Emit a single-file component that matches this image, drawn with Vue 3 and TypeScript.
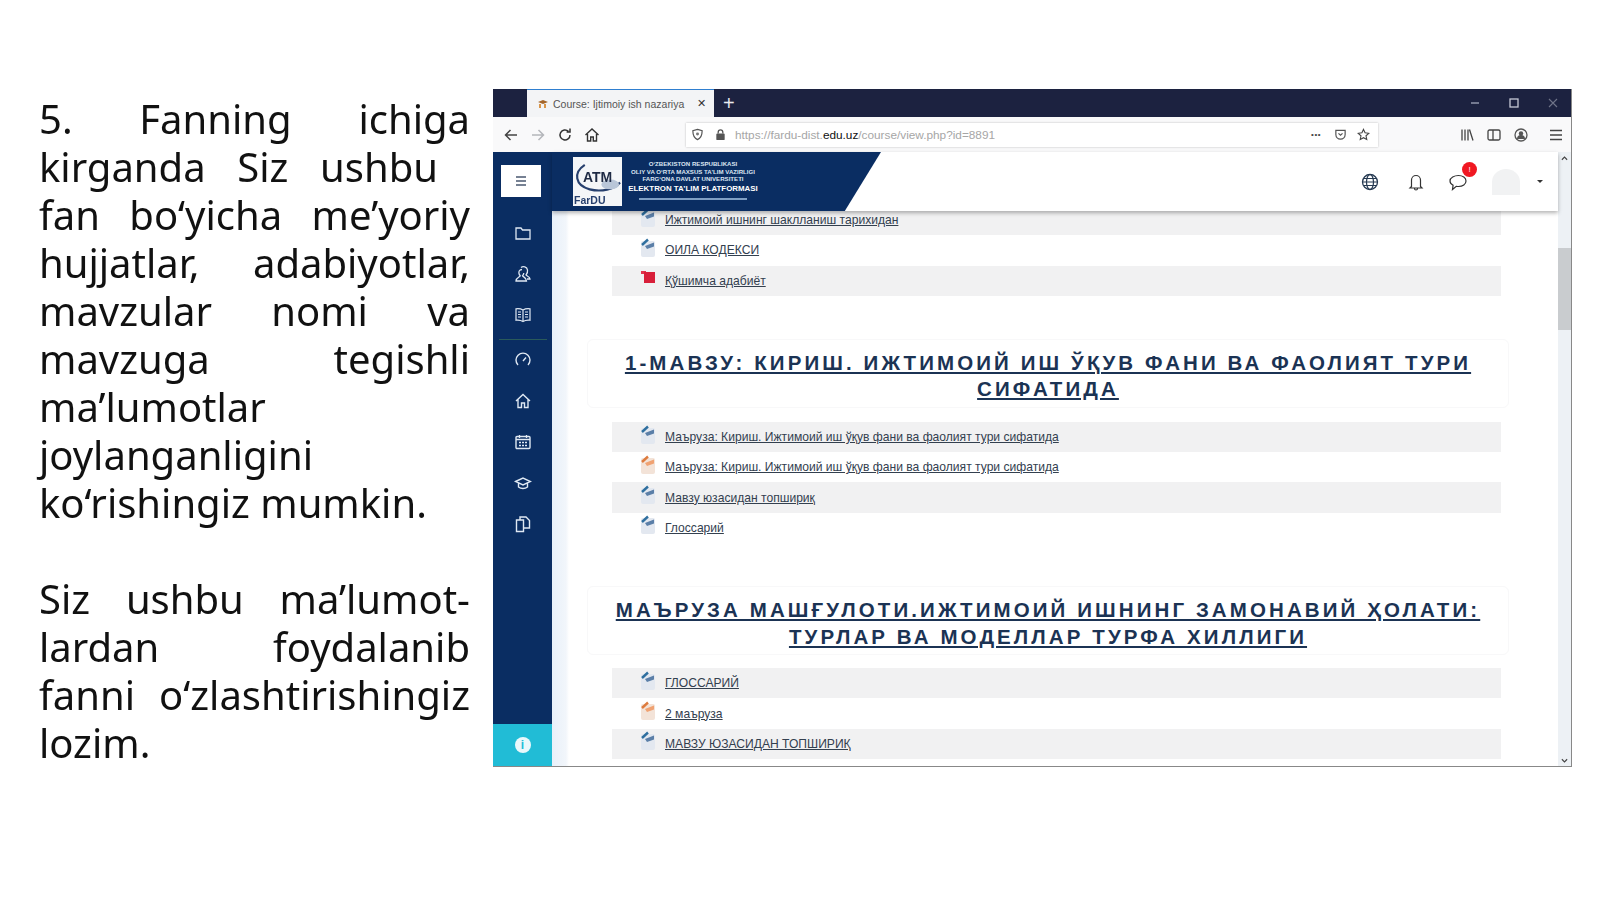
<template>
  <div class="slide">
    <div class="copy">
      <div class="para">
        <div v-for="(l, i) in introLines" :key="i" :class="['line', l.full ? 'full' : '', l.short ? 'short' : '']">{{ l.text }}</div>
      </div>
      <div class="para">
        <div v-for="(l, i) in outroLines" :key="i" :class="['line', l.full ? 'full' : '']">{{ l.text }}</div>
      </div>
    </div>

    <div class="browser">
      <!-- tab strip -->
      <div class="tabbar">
        <div class="tab">
          <svg class="favicon" viewBox="0 0 12 12"><path d="M1 4 6 2l5 2-5 2z" fill="#a5662a" /><path d="M3 6v4M8 6v4" stroke="#d9964b" stroke-width="2" /></svg>
          <span class="tab-title">Course: Ijtimoiy ish nazariya</span>
          <span class="tab-x">✕</span>
        </div>
        <span class="tab-plus">+</span>
        <div class="winctl">
          <svg viewBox="0 0 12 12"><path d="M2 6h8" stroke="#9aa0b4" stroke-width="1.4" /></svg>
          <svg viewBox="0 0 12 12"><rect x="2" y="2" width="8" height="8" fill="none" stroke="#c5c8d4" stroke-width="1.3" /></svg>
          <svg viewBox="0 0 12 12"><path d="m2 2 8 8M10 2l-8 8" stroke="#6f7488" stroke-width="1.1" /></svg>
        </div>
      </div>

      <!-- toolbar -->
      <div class="toolbar">
        <div class="nav">
          <span class="back-wrap"><svg class="tb" viewBox="0 0 16 16"><path d="M14 8H3M7.5 3 2.5 8l5 5" fill="none" stroke="#444" stroke-width="1.5" /></svg></span>
          <svg class="tb" viewBox="0 0 16 16"><path d="M2 8h11M8.5 3l5 5-5 5" fill="none" stroke="#b4b6ba" stroke-width="1.5" /></svg>
          <svg class="tb" viewBox="0 0 16 16"><path d="M13 8a5 5 0 1 1-1.6-3.7M13 1.5v3.4H9.6" fill="none" stroke="#333" stroke-width="1.5" /></svg>
          <svg class="tb" viewBox="0 0 16 16"><path d="M1.5 8 8 2l6.500 6M3.500 7v7h3.200v-4h2.600v4h3.200V7" fill="none" stroke="#333" stroke-width="1.400" /></svg>
        </div>
        <div class="urlbar">
          <svg class="ub" viewBox="0 0 14 14"><path d="M7 1.500 12 3c0 5-1.500 8-5 9.500C3.500 11 2 8 2 3z" fill="none" stroke="#555" stroke-width="1.300" /><circle cx="7" cy="6.500" r="1.600" fill="#777" /></svg>
          <svg class="ub" viewBox="0 0 14 14"><rect x="2.500" y="6" width="9" height="7" rx="1" fill="#555" /><path d="M4.500 6V4.500a2.500 2.500 0 0 1 5 0V6" fill="none" stroke="#555" stroke-width="1.400" /></svg>
          <span class="url"><span class="dim">https://fardu-dist.</span>edu.uz<span class="dim">/course/view.php?id=8891</span></span>
          <span class="dots">•••</span>
          <svg class="ub" viewBox="0 0 14 14"><path d="M2 2.500h10v4.500a5 5 0 0 1-10 0z" fill="none" stroke="#555" stroke-width="1.300" /><path d="m4.800 5.800 2.200 2 2.200-2" fill="none" stroke="#555" stroke-width="1.300" /></svg>
          <svg class="ub" viewBox="0 0 14 14"><path d="m7 1.500 1.700 3.700 4 .5-3 2.700.8 4L7 10.400l-3.500 2 .8-4-3-2.700 4-.5z" fill="none" stroke="#444" stroke-width="1.200" /></svg>
        </div>
        <div class="tools">
          <svg class="tb" viewBox="0 0 16 16"><path d="M3 2.500v11M6 2.500v11M9 2.500v11M10.500 2.500l3.500 11" fill="none" stroke="#444" stroke-width="1.300" /></svg>
          <svg class="tb" viewBox="0 0 16 16"><rect x="2" y="3" width="12" height="10" rx="1.500" fill="none" stroke="#444" stroke-width="1.300" /><path d="M7 3v10" stroke="#444" stroke-width="1.300" /></svg>
          <svg class="tb" viewBox="0 0 16 16"><circle cx="8" cy="8" r="6" fill="none" stroke="#555" stroke-width="1.300" /><circle cx="8" cy="6.500" r="2.200" fill="#555" /><path d="M4 12a4 4 0 0 1 8 0z" fill="#555" /></svg>
          <svg class="tb menu" viewBox="0 0 16 16"><path d="M2 3.500h12M2 8h12M2 12.500h12" stroke="#444" stroke-width="1.400" /></svg>
        </div>
      </div>

      <div class="page">
        <!-- navy rail -->
        <aside class="rail">
          <div class="toggle"><svg viewBox="0 0 16 16"><path d="M3 4h10M3 8h10M3 12h10" stroke="#4a5870" stroke-width="1.300" /></svg></div>
          <div class="rail-icons">
            <svg viewBox="0 0 18 18"><path d="M2 4h5l1.500 2H16v9H2z" fill="none" stroke="#dfe8f3" stroke-width="1.300" /></svg>
            <svg viewBox="0 0 18 18"><path d="M7 2.500C9 1 13 1.500 13.500 5c.3 2-.5 4-1.500 5 .5 1 4 1.500 4 4h-3M8 4.500c-2.500 0-3.500 2-3 4 .2 1 .7 1.800 1.200 2.300C6 12 2 12.500 2 16h10.500c0-3.500-3.500-4-4-5.200.6-.6 1.200-1.600 1.300-2.800" fill="none" stroke="#dfe8f3" stroke-width="1.300" /></svg>
            <svg viewBox="0 0 18 18"><path d="M9 4C7 2.800 4.500 2.500 2 2.800v11.400c2.500-.3 5 0 7 1.300 2-1.300 4.500-1.600 7-1.300V2.800C13.500 2.500 11 2.800 9 4zM9 4v11.500M4 6h3M4 8.500h3M4 11h3M11 6h3M11 8.500h3M11 11h3" fill="none" stroke="#dfe8f3" stroke-width="1.200" /></svg>
          </div>
          <div class="rail-rule"></div>
          <div class="rail-icons lower">
            <svg viewBox="0 0 18 18"><path d="M4 14a7 7 0 1 1 10 0M9 10l3-3.500" fill="none" stroke="#dfe8f3" stroke-width="1.400" /></svg>
            <svg viewBox="0 0 18 18"><path d="M2 9 9 2.500 16 9M4 7.500V15.500h3.500V11h3v4.500H14V7.500" fill="none" stroke="#dfe8f3" stroke-width="1.400" /></svg>
            <svg viewBox="0 0 18 18"><rect x="2" y="3.500" width="14" height="12" rx="1" fill="none" stroke="#dfe8f3" stroke-width="1.400" /><path d="M2 6.500h14M5.500 2v3M12.500 2v3M5 9.500h2M8 9.500h2M11 9.500h2M5 12.500h2M8 12.500h2M11 12.500h2" fill="none" stroke="#dfe8f3" stroke-width="1.300" /></svg>
            <svg viewBox="0 0 18 18"><path d="M1.500 7.500 9 4l7.500 3.500L9 11zM4.500 9v4c2.500 2 6.500 2 9 0V9" fill="none" stroke="#dfe8f3" stroke-width="1.400" /></svg>
            <svg viewBox="0 0 18 18"><path d="M2.500 5h7v11.500h-7zM6 5V2h6l3.500 3.500V13H9.500" fill="none" stroke="#dfe8f3" stroke-width="1.400" /></svg>
          </div>
          <div class="rail-foot"><span class="info">i</span></div>
        </aside>

        <div class="main">
          <div class="column">
            <header class="head">
              <div class="brand">
                <div class="logo">
                  <svg viewBox="0 0 50 50" class="logo-art"><path d="M12 8C0 16 2 29 17 33c12 3 25 0 31-7" fill="none" stroke="#27406e" stroke-width="2.200" /><ellipse cx="38" cy="28" rx="9" ry="5" fill="#b9c6d8" /></svg>
                  <span class="atm">ATM</span>
                  <span class="fardu">FarDU</span>
                </div>
                <div class="org">
                  <p>O‘ZBEKISTON RESPUBLIKASI</p>
                  <p>OLIY VA O‘RTA MAXSUS TA’LIM VAZIRLIGI</p>
                  <p>FARG‘ONA DAVLAT UNIVERSITETI</p>
                  <p class="org-name">ELEKTRON TA’LIM PLATFORMASI</p>
                  <div class="org-line"></div>
                </div>
              </div>
              <div class="head-right">
                <svg class="hi globe" viewBox="0 0 20 20"><circle cx="10" cy="10" r="7.500" fill="none" stroke="#263a52" stroke-width="1.300" /><ellipse cx="10" cy="10" rx="3.500" ry="7.500" fill="none" stroke="#263a52" stroke-width="1.200" /><path d="M2.500 10h15M3.500 6.500h13M3.500 13.500h13" stroke="#263a52" stroke-width="1.100" /></svg>
                <svg class="hi" viewBox="0 0 20 20"><path d="M5.500 14.500V8a4.500 4.500 0 0 1 9 0v6.500l1.500 1.500H4zM8.500 16.500a1.500 1.500 0 0 0 3 0" fill="none" stroke="#333" stroke-width="1.200" /></svg>
                <div class="chat">
                  <svg class="hi" viewBox="0 0 20 20"><path d="M10.500 3.500c4.200 0 7.500 2.200 7.500 5.500s-3.300 5.500-7.500 5.500c-.8 0-1.500-.1-2.200-.2L4.500 17.500l.6-4.300C3.200 12.200 2 10.700 2 9c0-3.300 4.300-5.500 8.500-5.500z" fill="none" stroke="#333" stroke-width="1.200" /></svg>
                  <span class="badge">!</span>
                </div>
                <div class="avatar"></div>
                <span class="caret"></span>
              </div>
            </header>

            <div class="content">
              <ul class="rows">
                <li v-for="r in topRows" :key="r.text" class="row">
                  <svg class="fi" viewBox="0 0 16 20">
                    <template v-if="r.kind === 'red'">
                      <path d="M1 3h5v3H1z" fill="#e2344c" />
                      <rect x="4" y="4" width="11" height="11" fill="#d81f3a" />
                    </template>
                    <template v-else>
                      <rect x="1" y="3" width="14" height="16" rx="2" :fill="palette[r.kind].page" />
                      <path d="M2 7 8 1.500" :stroke="palette[r.kind].stroke" stroke-width="2.400" />
                      <path d="M5 8 14 4.500v4L7 11z" :fill="palette[r.kind].mark" />
                    </template>
                  </svg>
                  <a>{{ r.text }}</a>
                </li>
              </ul>

              <div class="topic first-topic">
                <h2><span>1-МАВЗУ: КИРИШ. ИЖТИМОИЙ ИШ ЎҚУВ ФАНИ ВА ФАОЛИЯТ ТУРИ</span><br /><span>СИФАТИДА</span></h2>
              </div>
              <ul class="rows">
                <li v-for="(r, i) in midRows" :key="i" class="row">
                  <svg class="fi" viewBox="0 0 16 20">
                    <rect x="1" y="3" width="14" height="16" rx="2" :fill="palette[r.kind].page" />
                    <path d="M2 7 8 1.500" :stroke="palette[r.kind].stroke" stroke-width="2.400" />
                    <path d="M5 8 14 4.500v4L7 11z" :fill="palette[r.kind].mark" />
                  </svg>
                  <a>{{ r.text }}</a>
                </li>
              </ul>

              <div class="topic second-topic">
                <h2><span>МАЪРУЗА МАШҒУЛОТИ.ИЖТИМОИЙ ИШНИНГ ЗАМОНАВИЙ ҲОЛАТИ:</span><br /><span>ТУРЛАР ВА МОДЕЛЛАР ТУРФА ХИЛЛИГИ</span></h2>
              </div>
              <ul class="rows">
                <li v-for="r in lastRows" :key="r.text" class="row">
                  <svg class="fi" viewBox="0 0 16 20">
                    <rect x="1" y="3" width="14" height="16" rx="2" :fill="palette[r.kind].page" />
                    <path d="M2 7 8 1.500" :stroke="palette[r.kind].stroke" stroke-width="2.400" />
                    <path d="M5 8 14 4.500v4L7 11z" :fill="palette[r.kind].mark" />
                  </svg>
                  <a>{{ r.text }}</a>
                </li>
              </ul>
            </div>
          </div>

          <div class="scroll">
            <svg class="arrow" viewBox="0 0 8 6"><path d="M1 5 4 2l3 3" fill="none" stroke="#444" stroke-width="1.300" /></svg>
            <div class="thumb"></div>
            <svg class="arrow down" viewBox="0 0 8 6"><path d="M1 1 4 4l3-3" fill="none" stroke="#444" stroke-width="1.300" /></svg>
          </div>
        </div>
      </div>
    </div>
  </div>
</template>

<script setup lang="ts">
interface Line {
  text: string
  full?: boolean
  short?: boolean
}

type Kind = 'blue' | 'orange' | 'red'

const palette: Record<string, { page: string; stroke: string; mark: string }> = {
  blue: { page: '#e3e8f0', stroke: '#2f6f9f', mark: '#5b7fa8' },
  orange: { page: '#f3e3d8', stroke: '#dd7b3e', mark: '#f0a272' },
  red: { page: '#d81f3a', stroke: '#d81f3a', mark: '#d81f3a' }
}

const introLines: Line[] = [
  { text: '5. Fanning ichiga', full: true },
  { text: 'kirganda Siz ushbu', full: true, short: true },
  { text: 'fan bo‘yicha me’yoriy', full: true },
  { text: 'hujjatlar, adabiyotlar,', full: true },
  { text: 'mavzular nomi va', full: true },
  { text: 'mavzuga tegishli', full: true },
  { text: 'ma’lumotlar' },
  { text: 'joylanganligini' },
  { text: 'ko‘rishingiz mumkin.' }
]

const outroLines: Line[] = [
  { text: 'Siz ushbu ma’lumot-', full: true },
  { text: 'lardan foydalanib', full: true },
  { text: 'fanni o‘zlashtirishingiz', full: true },
  { text: 'lozim.' }
]

const topRows: { text: string; kind: Kind }[] = [
  { text: 'Ижтимоий ишнинг шаклланиш тарихидан', kind: 'blue' },
  { text: 'ОИЛА КОДЕКСИ', kind: 'blue' },
  { text: 'Қўшимча адабиёт', kind: 'red' }
]

const midRows: { text: string; kind: Kind }[] = [
  { text: 'Маъруза: Кириш. Ижтимоий иш ўқув фани ва фаолият тури сифатида', kind: 'blue' },
  { text: 'Маъруза: Кириш. Ижтимоий иш ўқув фани ва фаолият тури сифатида', kind: 'orange' },
  { text: 'Мавзу юзасидан топшириқ', kind: 'blue' },
  { text: 'Глоссарий', kind: 'blue' }
]

const lastRows: { text: string; kind: Kind }[] = [
  { text: 'ГЛОССАРИЙ', kind: 'blue' },
  { text: '2 маъруза', kind: 'orange' },
  { text: 'МАВЗУ ЮЗАСИДАН ТОПШИРИҚ', kind: 'blue' }
]
</script>

<style>
html,
body {
  margin: 0;
  background: #fff;
}
</style>

<style scoped>
.slide {
  width: 1600px;
  height: 899px;
  display: flex;
  align-items: flex-start;
  padding: 89px 29px 0 39px;
  box-sizing: border-box;
  gap: 23px;
  overflow: hidden;
  background: #fff;
}

.copy {
  width: 431px;
  flex: none;
  padding-top: 6px;
  font-family: "Noto Sans", "Open Sans", sans-serif;
  font-size: 40px;
  line-height: 48px;
  color: #111;
  display: flex;
  flex-direction: column;
  gap: 48px;
  filter: blur(0.3px);
}

.line {
  white-space: nowrap;
}

.line.full {
  text-align: justify;
  text-align-last: justify;
  white-space: normal;
}

.line.short {
  width: 399px;
}

.browser {
  flex: none;
  width: 1079px;
  height: 678px;
  display: flex;
  flex-direction: column;
  font-family: "Liberation Sans", Arial, sans-serif;
  border-right: 1px solid #888;
  border-bottom: 1px solid #888;
  box-sizing: border-box;
  overflow: hidden;
  filter: blur(0.55px);
}

.tabbar {
  height: 28px;
  flex: none;
  display: flex;
  align-items: center;
  background: #1c2240;
  padding-left: 34px;
}

.tab {
  width: 187px;
  height: 28px;
  box-sizing: border-box;
  border-top: 1px solid #2f7fd0;
  background: #f3f4f6;
  display: flex;
  align-items: center;
  padding: 0 8px 0 10px;
  gap: 4px;
}

.favicon {
  width: 12px;
  height: 12px;
  flex: none;
}

.tab-title {
  flex: 1;
  font-size: 10.500px;
  color: #555;
  white-space: nowrap;
}

.tab-x {
  font-size: 11px;
  color: #333;
}

.tab-plus {
  color: #e8e9ee;
  font-size: 20px;
  margin-left: 9px;
}

.winctl {
  margin-left: auto;
  display: flex;
  gap: 27px;
  padding-right: 12px;
}

.winctl svg {
  width: 12px;
  height: 12px;
}

.toolbar {
  height: 35px;
  flex: none;
  display: flex;
  align-items: center;
  background: #f9f9fa;
  padding-left: 10px;
}

.tb {
  width: 16px;
  height: 16px;
  flex: none;
  display: block;
}

.nav {
  display: flex;
  align-items: center;
  gap: 11px;
  width: 183px;
  flex: none;
}

.back-wrap {
  position: relative;
  display: block;
}

.back-wrap::before {
  content: "";
  position: absolute;
  left: -6px;
  top: -6px;
  width: 28px;
  height: 28px;
  border-radius: 50%;
  background: #f0f0f2;
  z-index: -1;
}

.urlbar {
  width: 692px;
  height: 24px;
  flex: none;
  background: #fff;
  box-shadow: 0 0 2px rgba(0, 0, 0, 0.25);
  display: flex;
  align-items: center;
  padding: 0 8px 0 5px;
  box-sizing: border-box;
  gap: 10px;
}

.ub {
  width: 13px;
  height: 13px;
  flex: none;
}

.url {
  font-size: 11.800px;
  color: #111;
  margin-left: -2px;
  white-space: nowrap;
}

.dim {
  color: #a6a6a6;
}

.dots {
  margin-left: auto;
  margin-right: 3px;
  font-size: 8px;
  color: #444;
  letter-spacing: 0.5px;
}

.tools {
  display: flex;
  gap: 11px;
  margin-left: 81px;
}

.tools .menu {
  margin-left: 8px;
}

.page {
  flex: 1;
  min-height: 0;
  display: flex;
}

.rail {
  width: 59px;
  flex: none;
  background: #0a2d62;
  display: flex;
  flex-direction: column;
  align-items: center;
}

.toggle {
  width: 40px;
  height: 32px;
  margin: 13px 4px 0 0;
  background: #fff;
  display: flex;
  align-items: center;
  justify-content: center;
}

.toggle svg {
  width: 16px;
  height: 16px;
}

.rail-icons {
  display: flex;
  flex-direction: column;
  align-items: center;
  gap: 23px;
  margin-top: 27px;
}

.rail-icons svg {
  width: 18px;
  height: 18px;
  display: block;
}

.rail-icons.lower {
  margin-top: 11px;
}

.rail-rule {
  width: 48px;
  height: 1px;
  background: #2a5a5a;
  margin-top: 15px;
}

.rail-foot {
  margin-top: auto;
  width: 100%;
  height: 42px;
  background: #21bcd6;
  display: flex;
  align-items: center;
  justify-content: center;
}

.info {
  width: 16px;
  height: 16px;
  border-radius: 50%;
  background: #eaf8fb;
  color: #21bcd6;
  font-size: 12px;
  font-weight: 700;
  line-height: 16px;
  text-align: center;
}

.main {
  flex: 1;
  min-width: 0;
  display: flex;
}

.column {
  flex: 1;
  min-width: 0;
  display: flex;
  flex-direction: column;
}

.head {
  height: 59px;
  flex: none;
  position: relative;
  z-index: 2;
  display: flex;
  justify-content: space-between;
  align-items: center;
  background: #fff;
  box-shadow: 0 2px 4px rgba(0, 0, 0, 0.3);
}

.brand {
  width: 329px;
  height: 59px;
  background: #0a2d62;
  clip-path: polygon(0 0, 100% 0, 89% 100%, 0 100%);
  display: flex;
  align-items: center;
  padding-left: 21px;
  box-sizing: border-box;
  gap: 4px;
}

.logo {
  position: relative;
  width: 49px;
  height: 49px;
  flex: none;
  background: #f4f6f8;
  overflow: hidden;
}

.logo-art {
  position: absolute;
  inset: 0;
  width: 100%;
  height: 100%;
}

.atm {
  position: absolute;
  left: 10px;
  top: 12px;
  font-size: 14px;
  font-weight: 700;
  color: #1e2a44;
}

.fardu {
  position: absolute;
  left: 1px;
  bottom: 0;
  font-size: 10.500px;
  font-weight: 700;
  color: #27406e;
}

.org {
  color: #dce6f2;
  text-align: center;
  width: 134px;
  font-weight: 700;
  margin-top: -3px;
}

.org p {
  margin: 0;
  font-size: 6.100px;
  line-height: 7.500px;
  white-space: nowrap;
}

.org .org-name {
  font-size: 7.900px;
  line-height: 12px;
  color: #fff;
}

.org-line {
  width: 108px;
  height: 2px;
  margin: 3px auto 0;
  background: #7f9fc4;
}

.head-right {
  display: flex;
  align-items: center;
  padding-right: 15px;
}

.hi {
  width: 20px;
  height: 20px;
  display: block;
}

.globe {
  margin-right: 26px;
}

.chat {
  position: relative;
  margin-left: 22px;
}

.badge {
  position: absolute;
  top: -10px;
  right: -9px;
  width: 15px;
  height: 15px;
  border-radius: 50%;
  background: #f01822;
  color: #fff;
  font-size: 8px;
  line-height: 15px;
  text-align: center;
}

.avatar {
  width: 28px;
  height: 26px;
  margin-left: 24px;
  border-radius: 50% 50% 0 0;
  background: #f1f2f3;
}

.caret {
  width: 0;
  height: 0;
  margin-left: 17px;
  border: 3px solid transparent;
  border-top: 3.500px solid #333;
  border-bottom: 0;
}

.content {
  flex: 1;
  min-height: 0;
  margin-top: -6px;
  background: linear-gradient(90deg, #e8f0f9, #f2f6fb 14px, #fff 17px);
  padding: 0 57px 0 60px;
  box-sizing: border-box;
  overflow: hidden;
}

.rows {
  list-style: none;
  margin: 0;
  padding: 0;
}

.row {
  height: 30.300px;
  display: flex;
  align-items: center;
  padding-left: 28px;
  font-size: 12.100px;
}

.row:nth-child(odd) {
  background: #f1f1f2;
}

.row a {
  margin-left: 9px;
  color: #33404f;
  text-decoration: underline;
  white-space: nowrap;
}

.fi {
  width: 16px;
  height: 20px;
  flex: none;
  margin-top: -5px;
}

.topic {
  margin: 43px -8px 14px -25px;
  height: 69px;
  box-sizing: border-box;
  padding-top: 10px;
  border: 1px solid #f8f8f9;
  border-radius: 6px;
  background: #fff;
}

.second-topic {
  margin-top: 43px;
  margin-bottom: 13px;
}

.topic h2 {
  margin: 0;
  text-align: center;
  font-size: 20.500px;
  line-height: 26.500px;
  font-weight: 700;
  letter-spacing: 3.100px;
  color: #1b3354;
}

.topic h2 span {
  text-decoration: underline;
}

.scroll {
  width: 13px;
  flex: none;
  background: #edf1f5;
  position: relative;
}

.thumb {
  position: absolute;
  top: 96px;
  left: 0;
  width: 100%;
  height: 82px;
  background: #c9cccf;
}

.arrow {
  position: absolute;
  top: 3px;
  left: 3px;
  width: 7px;
  height: 6px;
}

.arrow.down {
  top: auto;
  bottom: 2px;
}
</style>
